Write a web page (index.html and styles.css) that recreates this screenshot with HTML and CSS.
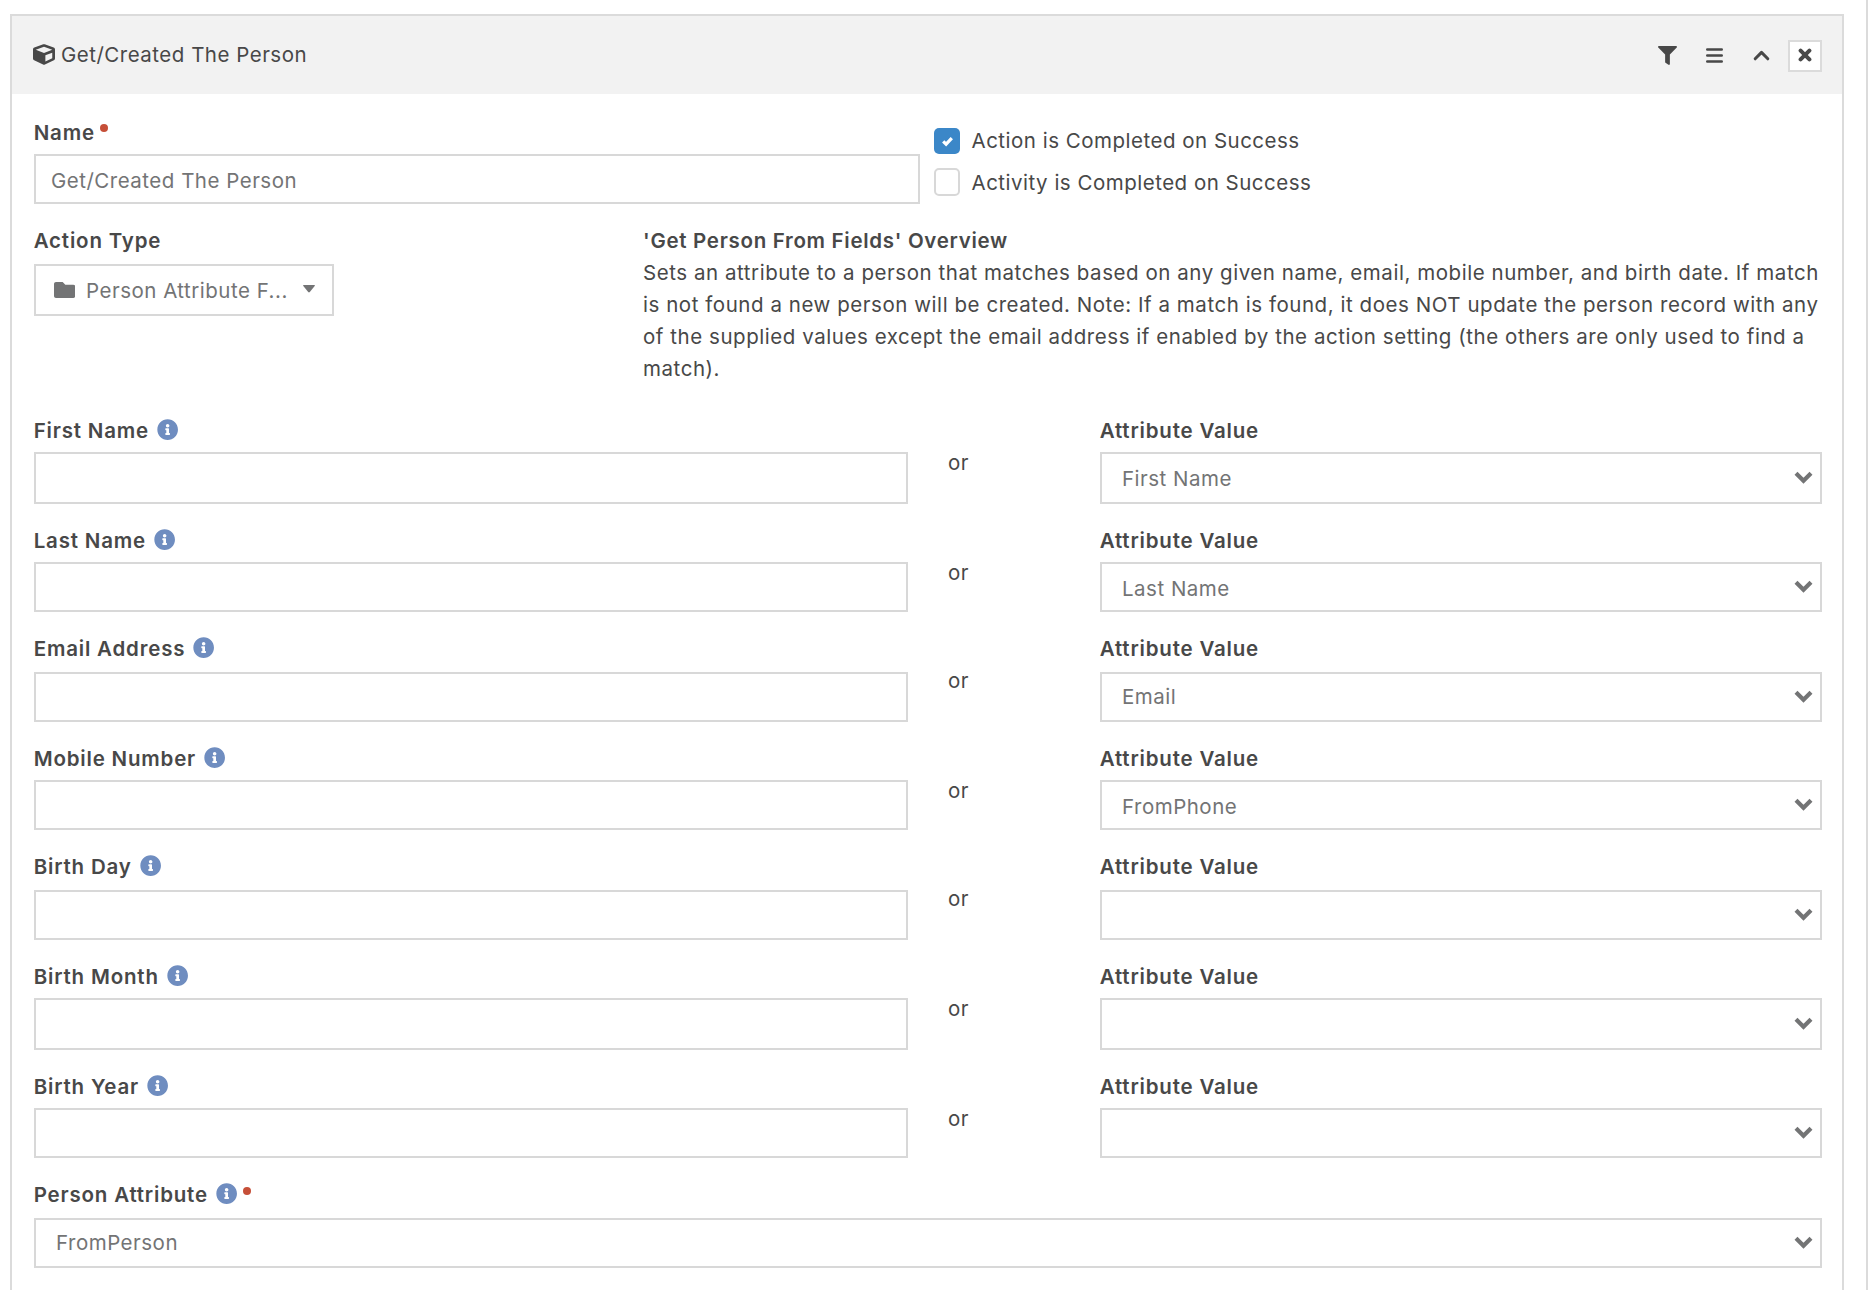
FILE: index.html
```html
<!DOCTYPE html>
<html lang="en">
<head>
<meta charset="utf-8">
<title>Get/Created The Person</title>
<link rel="stylesheet" href="styles.css">
</head>
<body>
<svg class="defs" aria-hidden="true">
  <symbol id="info" viewBox="0 0 512 512"><path d="M256 8C119.043 8 8 119.083 8 256c0 136.997 111.043 248 248 248s248-111.003 248-248C504 119.083 392.957 8 256 8zm0 110c23.196 0 42 18.804 42 42s-18.804 42-42 42-42-18.804-42-42 18.804-42 42-42zm56 254c0 6.627-5.373 12-12 12h-88c-6.627 0-12-5.373-12-12v-24c0-6.627 5.373-12 12-12h12v-64h-12c-6.627 0-12-5.373-12-12v-24c0-6.627 5.373-12 12-12h64c6.627 0 12 5.373 12 12v100h12c6.627 0 12 5.373 12 12v24z"/></symbol>
  <symbol id="chevron" viewBox="0 0 19 13"><path d="M2 2.3l7.5 7.4L17 2.3" fill="none" stroke="currentColor" stroke-width="4.2"/></symbol>
</svg>
<div class="page">
  <section class="panel">
    <header class="panel-head">
      <svg class="cube" viewBox="0 0 512 512" preserveAspectRatio="none"><path d="M239.1 6.3l-208 78c-18.7 7-31.1 25-31.1 45v225.1c0 18.2 10.3 34.8 26.5 42.9l208 104c13.5 6.8 29.4 6.8 42.9 0l208-104c16.3-8.1 26.5-24.8 26.5-42.9V129.3c0-20-12.4-37.9-31.1-44.9l-208-78C262 2.2 250 2.2 239.1 6.3zM256 68.4l192 72v1.1l-192 78-192-78v-1.1l192-72zm32 356V275.5l160-65v133.9l-160 80z"/></svg>
      <span class="title">Get/Created The Person</span>
      <div class="tools">
        <svg class="tool" viewBox="0 0 512 512"><path d="M487.976 0H24.028C2.71 0-8.047 25.866 7.058 40.971L192 225.941V432c0 7.831 3.821 15.17 10.237 19.662l80 55.98C298.02 518.69 320 507.493 320 487.98V225.941l184.947-184.97C520.021 25.896 509.338 0 487.976 0z"/></svg>
        <svg class="tool stroked" viewBox="0 0 19 19"><path d="M2.3 3.5h14.4M2.3 9.5h14.4M2.3 15.5h14.4" stroke-width="2.6"/></svg>
        <svg class="tool stroked" viewBox="0 0 19 19"><path d="M3.2 12.8l6.3-6.4 6.3 6.4" stroke-width="3"/></svg>
        <button class="close" type="button" aria-label="Remove"><svg viewBox="0 0 14 14"><path d="M2.6 2.6l8.8 8.8M11.4 2.6l-8.8 8.8" stroke-width="4"/></svg></button>
      </div>
    </header>
    <div class="panel-body">
      <div class="row row-name">
        <div class="field">
          <div class="label">Name<i class="required"></i></div>
          <div class="control text">Get/Created The Person</div>
        </div>
        <div class="checks">
          <div class="check"><span class="box checked"><svg viewBox="0 0 13 12"><path d="M2.2 6.3l2.9 2.9 5.7-6" fill="none" stroke="currentColor" stroke-width="3.2"/></svg></span>Action is Completed on Success</div>
          <div class="check"><span class="box"></span>Activity is Completed on Success</div>
        </div>
      </div>
      <div class="row row-type">
        <div class="field low tall">
          <div class="label">Action Type</div>
          <div class="control picker">
            <svg class="folder" viewBox="0 64 512 384"><path d="M464 128H272l-64-64H48C21.49 64 0 85.49 0 112v288c0 26.51 21.49 48 48 48h416c26.51 0 48-21.49 48-48V176c0-26.51-21.49-48-48-48z"/></svg>
            <span>Person Attribute F...</span>
            <svg class="caret" viewBox="0 0 12 8"><path d="M.7 0h10.6q1 .1.4.9L6.8 7q-.8.8-1.6 0L.3.9Q-.3.1.7 0z"/></svg>
          </div>
        </div>
        <div class="overview">
          <b>'Get Person From Fields' Overview</b>
          <p>Sets an attribute to a person that matches based on any given name, email, mobile number, and birth date. If match is not found a new person will be created. Note: If a match is found, it does NOT update the person record with any of the supplied values except the email address if enabled by the action setting (the others are only used to find a match).</p>
        </div>
      </div>
      <div class="row pair tall">
        <div class="field"><div class="label">First Name<svg class="info"><use href="#info"/></svg></div><div class="control"></div></div>
        <div class="or">or</div>
        <div class="field"><div class="label">Attribute Value</div><div class="control select">First Name<svg class="chevron"><use href="#chevron"/></svg></div></div>
      </div>
      <div class="row pair short">
        <div class="field"><div class="label">Last Name<svg class="info"><use href="#info"/></svg></div><div class="control"></div></div>
        <div class="or">or</div>
        <div class="field"><div class="label">Attribute Value</div><div class="control select">Last Name<svg class="chevron"><use href="#chevron"/></svg></div></div>
      </div>
      <div class="row pair low">
        <div class="field"><div class="label">Email Address<svg class="info"><use href="#info"/></svg></div><div class="control"></div></div>
        <div class="or">or</div>
        <div class="field"><div class="label">Attribute Value</div><div class="control select">Email<svg class="chevron"><use href="#chevron"/></svg></div></div>
      </div>
      <div class="row pair short">
        <div class="field"><div class="label">Mobile Number<svg class="info"><use href="#info"/></svg></div><div class="control"></div></div>
        <div class="or">or</div>
        <div class="field"><div class="label">Attribute Value</div><div class="control select">FromPhone<svg class="chevron"><use href="#chevron"/></svg></div></div>
      </div>
      <div class="row pair low">
        <div class="field"><div class="label">Birth Day<svg class="info"><use href="#info"/></svg></div><div class="control"></div></div>
        <div class="or">or</div>
        <div class="field"><div class="label">Attribute Value</div><div class="control select"><svg class="chevron"><use href="#chevron"/></svg></div></div>
      </div>
      <div class="row pair tall">
        <div class="field"><div class="label">Birth Month<svg class="info"><use href="#info"/></svg></div><div class="control"></div></div>
        <div class="or">or</div>
        <div class="field"><div class="label">Attribute Value</div><div class="control select"><svg class="chevron"><use href="#chevron"/></svg></div></div>
      </div>
      <div class="row pair short">
        <div class="field"><div class="label">Birth Year<svg class="info"><use href="#info"/></svg></div><div class="control"></div></div>
        <div class="or">or</div>
        <div class="field"><div class="label">Attribute Value</div><div class="control select"><svg class="chevron"><use href="#chevron"/></svg></div></div>
      </div>
      <div class="row low">
        <div class="field"><div class="label">Person Attribute<svg class="info"><use href="#info"/></svg><i class="required"></i></div><div class="control select">FromPerson<svg class="chevron"><use href="#chevron"/></svg></div></div>
      </div>
    </div>
  </section>
</div>
</body>
</html>
```
FILE: styles.css
```css
* { box-sizing: border-box; }

body {
  margin: 0;
  background: #fff;
  color: #484848;
  font: 400 20.5px/32px Inter, "Liberation Sans", sans-serif;
  letter-spacing: .5px;
}

svg { display: block; flex: none; fill: currentColor; }
.defs { display: none; }

.page {
  height: 1290px;
  overflow: hidden;
  padding: 14px 22px 0 10px;
  border-right: 2px solid #dbdbdb;
}

.panel {
  height: 1300px;
  border: 2px solid #dbdbdb;
}

.panel-head {
  display: flex;
  align-items: center;
  height: 78px;
  padding: 0 20px 0 21px;
  background: #f2f2f2;
}
.cube { width: 22px; height: 21px; margin: -2px 6px 0 0; }
.tools {
  display: flex;
  align-items: center;
  gap: 28px;
  margin-left: auto;
}
.tool { width: 19px; height: 19px; }
.stroked { fill: none; stroke: currentColor; stroke-linecap: round; stroke-linejoin: round; }
.close {
  display: flex;
  align-items: center;
  justify-content: center;
  width: 34px;
  height: 32px;
  margin: 2px 0 0 -11px;
  padding: 0 1px 2px 0;
  color: inherit;
  background: #fff;
  border: 2px solid #dbdbdb;
}
.close svg { width: 14px; height: 14px; stroke: currentColor; stroke-linecap: round; }

.panel-body { padding: 22px 20px 0 22px; }

/* --drop: label top to control top; --size: control height */
.row { display: grid; align-items: start; height: 110px; --drop: 38px; --size: 50px; }
.low { --drop: 40px; }
.tall { --size: 52px; }
.short { height: 108px; }
.pair { grid-template-columns: 874px 192px 722px; }
.row-name { grid-template-columns: 886px 1fr; column-gap: 14px; height: 108px; }
.row-type { grid-template-columns: 300px 1fr; column-gap: 309px; height: 190px; }

.label {
  display: flex;
  height: var(--drop);
  padding-top: 1px;
  margin-left: -.3px;
  font-weight: 600;
  letter-spacing: .81px;
}
.info { width: 21.3px; height: 21.3px; margin: 4.2px 0 0 8px; color: #6f8dc0; }
.required {
  width: 8px;
  height: 8px;
  margin: 7px 0 0 5.3px;
  border-radius: 50%;
  background: #c64f38;
}
.info + .required { margin-top: 8px; }

.control {
  display: flex;
  height: var(--size);
  padding: calc(47px - var(--drop)) 15px 0;
  color: #737475;
  background: #fff;
  border: 2px solid #d8d8d8;
}
.select { padding-left: 20px; padding-right: 7px; }
.chevron {
  width: 19px;
  height: 13px;
  margin: calc((var(--size) - 4px - 13px) / 2 - 47.5px + var(--drop)) 0 0 auto;
}

.picker { padding: 9px 17px 0 18px; }
.folder { width: 21.3px; height: 16px; margin: 7px 10.7px 0 0; }
.caret { width: 12px; height: 8px; margin: 10px 0 0 auto; }

.checks { padding-top: 9px; }
.check { display: flex; height: 42px; }
.box {
  width: 26px;
  height: 28px;
  margin: 1px 11.5px 0 0;
  border: 2px solid #d8d8d8;
  border-radius: 5px;
}
.checked {
  display: flex;
  align-items: center;
  justify-content: center;
  height: 26px;
  margin-top: 3px;
  padding-bottom: 1px;
  border: 0;
  color: #fff;
  background: #3b87c8;
}
.checked svg { width: 13px; height: 12px; }

.overview { padding-top: 1px; }
.overview p { margin: 0 -8px 0 0; letter-spacing: .55px; }
.overview b { display: block; font-weight: 600; letter-spacing: .7px; }

.or { padding: 33px 0 0 40px; }
```
